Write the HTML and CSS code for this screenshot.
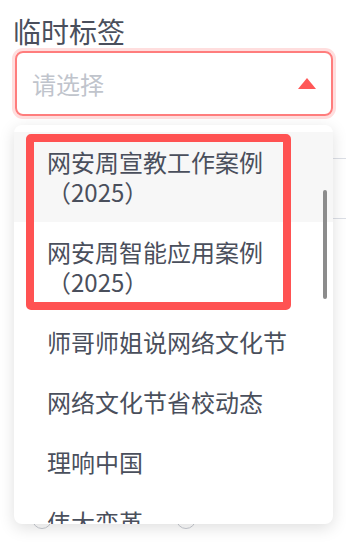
FILE: index.html
```html
<!DOCTYPE html>
<html lang="zh-CN">
<head>
    <meta charset="UTF-8">
    <meta name="viewport" content="width=device-width, initial-scale=1.0">
    <title>临时标签</title>
    <link rel="stylesheet" href="styles.css">
</head>
<body>
    <div class="page">
        <div class="form-label">临时标签</div>

        <div class="select is-open">
            <span class="placeholder">请选择</span>
            <span class="arrow"></span>
        </div>

        <!-- content underneath the dropdown -->
        <div class="field"></div>
        <div class="radio-row">
            <span class="radio"></span>
            <span class="radio"></span>
        </div>

        <div class="dropdown">
            <ul class="options">
                <li class="option hover">网安周宣教工作案例（2025）</li>
                <li class="option">网安周智能应用案例（2025）</li>
                <li class="option">师哥师姐说网络文化节</li>
                <li class="option">网络文化节省校动态</li>
                <li class="option">理响中国</li>
                <li class="option">伟大变革</li>
            </ul>
            <div class="scrollbar"></div>
            <div class="mark"></div>
        </div>
    </div>
</body>
</html>
```

FILE: styles.css
```css
html, body {
    margin: 0;
    padding: 0;
    background: #fff;
    overflow: hidden;
}
body {
    font-family: "Noto Sans CJK SC", "Noto Sans", sans-serif;
    color: #4a4f5c;
}
.page {
    position: relative;
    height: 546px;
    padding: 0 13px;
}
.form-label {
    font-size: 28px;
    line-height: 34px;
    padding-top: 14px;
    margin-bottom: 3px;
}
.select {
    display: flex;
    align-items: center;
    justify-content: space-between;
    box-sizing: border-box;
    width: 318px;
    height: 65px;
    margin-left: 2px;
    padding: 0 15px;
    border: 2px solid #ff7d7d;
    border-radius: 8px;
    box-shadow: 0 0 0 3px #ffdede;
}
.placeholder {
    font-size: 24px;
    color: #c0c4cc;
}
.arrow {
    width: 0;
    height: 0;
    border-left: 9px solid transparent;
    border-right: 9px solid transparent;
    border-bottom: 11px solid #ff5757;
}
.field {
    height: 59px;
    margin: 42px -20px 0 1px;
    border-top: 1px solid #dcdfe6;
    border-bottom: 1px solid #dcdfe6;
}
.radio-row {
    display: flex;
    gap: 124px;
    margin: 290px 0 0 19px;
}
.radio {
    width: 18px;
    height: 18px;
    border: 1px solid #c8cbd2;
    border-radius: 50%;
}
.dropdown {
    position: absolute;
    left: 14px;
    top: 125px;
    width: 319px;
    height: 399px;
    background: #fff;
    border-radius: 8px;
    box-shadow: 0 4px 16px rgba(0, 0, 0, 0.13);
    overflow: hidden;
}
.options {
    list-style: none;
    margin: 0;
    padding: 7px 0 0;
}
.option {
    padding: 15px 33px;
    font-size: 24px;
    line-height: 30px;
    color: #4a4f5c;
}
.option.hover {
    background: #f7f7f7;
}
.scrollbar {
    position: absolute;
    right: 6px;
    top: 65px;
    width: 4px;
    height: 109px;
    border-radius: 2px;
    background: #8c8c8c;
}
.mark {
    position: absolute;
    left: 12px;
    top: 9px;
    width: 249px;
    height: 160px;
    border: 8px solid #ff5252;
    border-radius: 5px;
}
```
